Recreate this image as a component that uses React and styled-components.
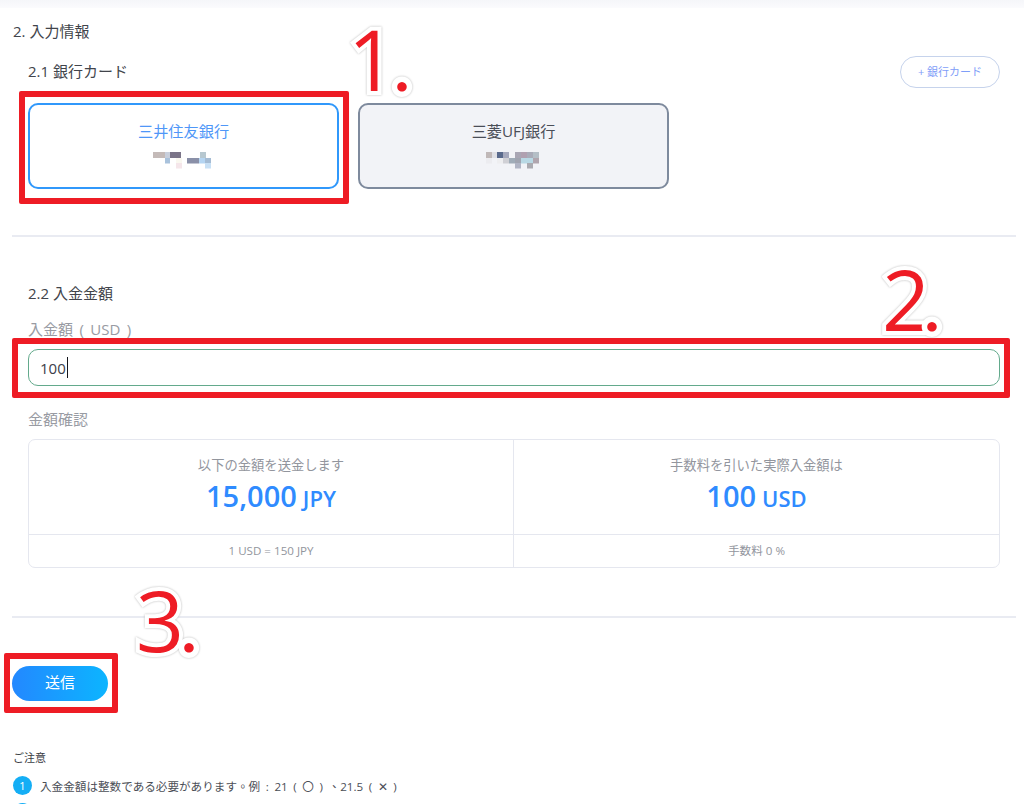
import React from "react";
import styled, { createGlobalStyle } from "styled-components";

const Global = createGlobalStyle`
  html, body { margin: 0; padding: 0; background: #fff; }
  body { font-family: "Open Sans", "Noto Sans CJK JP", sans-serif; color: #3a3d44; }
`;

const Page = styled.div`
  position: relative;
  width: 1024px;
  height: 804px;
  overflow: hidden;
  background: #fff;
`;
const TopStrip = styled.div`
  height: 8px;
  background: linear-gradient(#f5f6f9, #fbfbfd);
`;
const Main = styled.main`
  padding: 0 8px 0 12px;
`;
const Title = styled.h2`
  margin: 12px 0 0 1px;
  font-size: 15px;
  line-height: 22px;
  font-weight: 400;
  color: #41444b;
`;
const SubHeaderRow = styled.div`
  display: flex;
  align-items: center;
  justify-content: space-between;
  margin-top: 14px;
  padding: 0 16px;
`;
const SubTitle = styled.h3`
  margin: ${(p) => p.$top || 0}px 0 0;
  padding: ${(p) => (p.$indent ? "0 16px" : "0 0 2px")};
  font-size: 15px;
  line-height: 22px;
  font-weight: 400;
  color: #41444b;
`;
const AddButton = styled.button`
  width: 100px;
  height: 32px;
  padding: 0 0 2px;
  border: 1px solid #c6d3ec;
  border-radius: 16px;
  background: #fff;
  color: #7f9ef8;
  font: 400 11px "Open Sans", "Noto Sans CJK JP", sans-serif;
`;
const CardRow = styled.div`
  display: flex;
  gap: 19px;
  margin-top: 15px;
  padding: 0 16px;
`;
const BankCard = styled.div`
  box-sizing: border-box;
  width: 311px;
  height: 86px;
  display: flex;
  flex-direction: column;
  align-items: center;
  padding-top: 15px;
  border: 2px solid ${(p) => (p.$selected ? "#3098fb" : "#7e8a9d")};
  border-radius: 10px;
  background: ${(p) => (p.$selected ? "#fff" : "#f2f3f7")};
  color: ${(p) => (p.$selected ? "#4f97f8" : "#4a4e57")};
`;
const BankName = styled.div`
  font-size: 15.2px;
  line-height: 22px;
`;
const Mosaic = styled.svg`
  display: block;
  margin: 10px 0 0 -3px;
`;
const Divider = styled.hr`
  margin: ${(p) => p.$top}px 0 0;
  height: 2px;
  border: 0;
  background: #e9ebf2;
`;
const FieldLabel = styled.div`
  margin-top: ${(p) => p.$top}px;
  padding: 0 16px;
  font-size: 15px;
  line-height: 22px;
  word-spacing: 2.5px;
  color: #989ba3;
`;
const FieldWrap = styled.div`
  margin-top: 9px;
  padding: 0 16px;
`;
const AmountField = styled.div`
  box-sizing: border-box;
  height: 37px;
  display: flex;
  align-items: center;
  padding: 0 11px;
  border: 1px solid #63aa8c;
  border-radius: 10px;
  font-size: 15px;
  color: #3d4049;
`;
const Caret = styled.span`
  width: 1px;
  height: 21px;
  margin-left: 1px;
  background: #14161c;
`;
const SummaryWrap = styled.div`
  margin-top: 9px;
  padding: 0 16px;
`;
const Summary = styled.div`
  box-sizing: border-box;
  height: 129px;
  display: grid;
  grid-template-columns: 484px 1fr;
  grid-template-rows: 94px 1fr;
  border: 1px solid #e5e7ef;
  border-radius: 7px;
`;
const SummaryCell = styled.div`
  display: flex;
  flex-direction: column;
  align-items: center;
  justify-content: ${(p) => (p.$foot ? "center" : "flex-start")};
  padding-top: ${(p) => (p.$foot ? 0 : 15)}px;
  border-left: ${(p) => (p.$second ? "1px solid #e5e7ef" : "0")};
  border-top: ${(p) => (p.$foot ? "1px solid #e5e7ef" : "0")};
`;
const CellCaption = styled.div`
  font-size: 13.3px;
  line-height: 20px;
  color: #92959d;
`;
const CellFoot = styled.div`
  padding-bottom: 2px;
  font-size: 11.6px;
  color: #92959d;
`;
const Amount = styled.div`
  margin-top: 2px;
  font-size: 29px;
  line-height: 38px;
  font-weight: 600;
  color: #2f8bff;
`;
const Unit = styled.span`
  margin-left: 6px;
  font-size: 22px;
`;
const SubmitButton = styled.button`
  display: block;
  width: 96px;
  height: 35px;
  margin-top: 48px;
  padding: 0 0 4px;
  border: 0;
  border-radius: 18px;
  background: linear-gradient(90deg, #2388ff, #0cb5ff);
  color: #fff;
  font: 400 15px "Open Sans", "Noto Sans CJK JP", sans-serif;
`;
const NoteTitle = styled.div`
  margin: 47px 0 0 1px;
  font-size: 11px;
  line-height: 20px;
  color: #3a3d44;
`;
const NoteList = styled.ol`
  display: flex;
  flex-direction: column;
  gap: 8px;
  margin: 8px 0 0 1px;
  padding: 0;
  list-style: none;
`;
const NoteItem = styled.li`
  display: flex;
  align-items: center;
  gap: 8px;
  height: 19px;
  font-family: "Open Sans", "Noto Sans CJK TC", sans-serif;
  font-size: 11.6px;
  word-spacing: 2.6px;
  white-space: pre;
  color: #4b4e56;
`;
const NoteBadge = styled.span`
  flex: none;
  width: 19px;
  height: 19px;
  display: flex;
  align-items: center;
  justify-content: center;
  border-radius: 50%;
  background: #14aef5;
  color: #fff;
  font-size: 11px;
`;

const MarkerBox = styled.div`
  position: absolute;
  box-sizing: border-box;
  left: ${(p) => p.$x}px;
  top: ${(p) => p.$y}px;
  width: ${(p) => p.$w}px;
  height: ${(p) => p.$h}px;
  border: 6px solid #ee1c25;
  border-radius: 2px;
  pointer-events: none;
`;
const MarkerNumber = styled.div`
  position: absolute;
  left: ${(p) => p.$x}px;
  top: ${(p) => p.$y}px;
  font-family: "Open Sans", sans-serif;
  font-size: 84px;
  line-height: 84px;
  font-weight: 500;
  color: #ee1c25;
  -webkit-text-stroke: 8px #fff;
  paint-order: stroke fill;
  filter: drop-shadow(0 0 1px #b9b9b9);
  pointer-events: none;
`;
const MarkerDot = styled.span`
  margin-left: ${(p) => p.$gap}px;
  font-family: "Lato", sans-serif;
  font-size: 76px;
  font-weight: 400;
  -webkit-text-stroke: 11px #fff;
`;

const mosaicA = [
  [0, 0, 12, "#c4bab8"], [12, 0, 5, "#c8cfdc"], [17, 0, 11, "#7b7488"], [47, 0, 6, "#b7c8d0"],
  [12, 6, 5, "#a9c2dc"], [23, 6, 6, "#faf8f0"], [34, 6, 12, "#8a90a8"], [46, 6, 6, "#b5d5f2"], [52, 6, 6, "#a5bcd4"],
  [23, 11, 6, "#f5e6ea"], [52, 11, 6, "#c8e0f5"],
];
const mosaicB = [
  [0, 0, 6, "#c0b8b8"], [6, 0, 5, "#e0e0e5"], [11, 0, 6, "#5a6a8c"], [17, 0, 6, "#a5a8bc"],
  [29, 0, 6, "#a9a6b4"], [35, 0, 6, "#b0a0b0"], [41, 0, 6, "#a9abb8"], [47, 0, 6, "#b4bec6"],
  [0, 6, 6, "#ececf0"], [11, 6, 6, "#eeeef0"], [17, 6, 6, "#d0d0d5"], [23, 6, 6, "#a0acb8"], [29, 6, 6, "#a0a4b0"],
  [35, 6, 12, "#b8d8e4"], [47, 6, 6, "#b0a5ae"],
  [29, 11, 6, "#b0b4c4"], [41, 11, 6, "#aaaab0"],
];

function Pixels({ cells, width }) {
  return (
    <Mosaic width={width} height="17" viewBox={`0 0 ${width} 17`}>
      {cells.map(([x, y, w, fill], i) => (
        <rect key={i} x={x} y={y} width={w} height={y === 0 ? 6 : 5.5} fill={fill} />
      ))}
    </Mosaic>
  );
}

export default function App() {
  return (
    <>
      <Global />
      <Page>
        <TopStrip />
        <Main>
          <Title>2. 入力情報</Title>
          <SubHeaderRow>
            <SubTitle>2.1 銀行カード</SubTitle>
            <AddButton>+ 銀行カード</AddButton>
          </SubHeaderRow>
          <CardRow>
            <BankCard $selected>
              <BankName>三井住友銀行</BankName>
              <Pixels cells={mosaicA} width={58} />
            </BankCard>
            <BankCard>
              <BankName>三菱UFJ銀行</BankName>
              <Pixels cells={mosaicB} width={53} />
            </BankCard>
          </CardRow>
          <Divider $top={46} />
          <SubTitle $indent $top={45}>2.2 入金金額</SubTitle>
          <FieldLabel $top={14}>入金額 ( USD )</FieldLabel>
          <FieldWrap>
            <AmountField>100<Caret /></AmountField>
          </FieldWrap>
          <FieldLabel $top={22}>金額確認</FieldLabel>
          <SummaryWrap>
            <Summary>
              <SummaryCell>
                <CellCaption>以下の金額を送金します</CellCaption>
                <Amount>15,000<Unit>JPY</Unit></Amount>
              </SummaryCell>
              <SummaryCell $second>
                <CellCaption>手数料を引いた実際入金額は</CellCaption>
                <Amount>100<Unit>USD</Unit></Amount>
              </SummaryCell>
              <SummaryCell $foot><CellFoot>1 USD = 150 JPY</CellFoot></SummaryCell>
              <SummaryCell $foot $second><CellFoot>手数料 0 %</CellFoot></SummaryCell>
            </Summary>
          </SummaryWrap>
          <Divider $top={48} />
          <SubmitButton>送信</SubmitButton>
          <NoteTitle>ご注意</NoteTitle>
          <NoteList>
            <NoteItem>
              <NoteBadge>1</NoteBadge>
              入金金額は整数である必要があります。例 : 21 ( 〇 ) 、21.5 ( ✕ )
            </NoteItem>
            <NoteItem>
              <NoteBadge>2</NoteBadge>
            </NoteItem>
          </NoteList>
        </Main>
        <MarkerBox $x={19} $y={91} $w={330} $h={113} />
        <MarkerBox $x={12} $y={338} $w={998} $h={60} />
        <MarkerBox $x={4} $y={653} $w={114} $h={60} />
        <MarkerNumber $x={348} $y={17}>1<MarkerDot $gap={-3}>.</MarkerDot></MarkerNumber>
        <MarkerNumber $x={882} $y={257}>2<MarkerDot $gap={-7}>.</MarkerDot></MarkerNumber>
        <MarkerNumber $x={136} $y={578}>3<MarkerDot $gap={-4}>.</MarkerDot></MarkerNumber>
      </Page>
    </>
  );
}
